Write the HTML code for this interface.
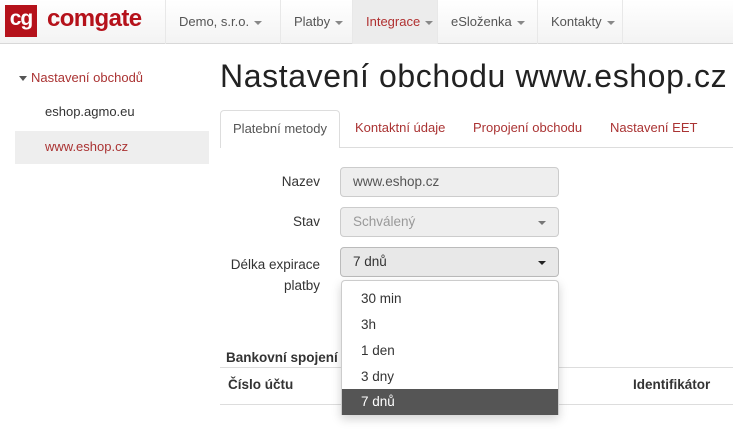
<!DOCTYPE html>
<html><head><meta charset="utf-8"><style>
*{box-sizing:border-box;margin:0;padding:0}
body{width:733px;height:429px;overflow:hidden;background:#fff;font-family:"Liberation Sans",sans-serif;font-size:13.5px;color:#333;position:relative}
.a{position:absolute}
.nav{left:0;top:0;width:733px;height:44px;background:linear-gradient(#fff,#f3f3f3);border-bottom:1px solid #d8d8d8}
.ni{top:0;height:44px;line-height:43px;border-left:1px solid #e8e8e8;color:#555;font-size:13px;padding-left:13px}
.car{display:inline-block;width:0;height:0;border-left:4px solid transparent;border-right:4px solid transparent;border-top:4px solid #888;vertical-align:middle;margin-left:5px}
.lbl{right:413px;text-align:right;font-size:13.5px;color:#333}
.inp{left:340px;width:219px;height:30px;border:1px solid #ccc;border-radius:4px;background:#eee;padding-left:12px;line-height:28px;font-size:13.5px;color:#555}
.dd{left:341px;top:280px;width:218px;height:135px;border:1px solid #ccc;border-bottom:none;border-radius:4px 4px 0 0;background:#fff;box-shadow:0 4px 10px rgba(0,0,0,.18);overflow:hidden}
.it{position:absolute;left:0;width:216px;height:26px;line-height:26px;padding-left:19px;font-size:13.5px;color:#333}
</style></head><body>
<div class="a nav"></div>
<div class="a" style="left:5px;top:5px;width:32px;height:32px;background:#b5121b;color:#fff;font-weight:bold;font-size:21px;line-height:28px;text-align:center;letter-spacing:-1px">cg</div>
<div class="a" style="left:47px;top:5px;font-size:24px;font-weight:bold;color:#b5121b;letter-spacing:-0.6px">comgate</div>
<div class="a ni" style="left:165px;width:115px">Demo, s.r.o.<span class="car"></span></div>
<div class="a ni" style="left:280px;width:72px">Platby<span class="car"></span></div>
<div class="a ni" style="left:352px;width:85px;background:#ececec;color:#b03030">Integrace<span class="car"></span></div>
<div class="a ni" style="left:437px;width:100px">eSloženka<span class="car"></span></div>
<div class="a ni" style="left:537px;width:86px;border-right:1px solid #e8e8e8">Kontakty<span class="car"></span></div>

<div class="a" style="left:19px;top:76px;width:0;height:0;border-left:4px solid transparent;border-right:4px solid transparent;border-top:5px solid #555"></div>
<div class="a" style="left:31px;top:70px;color:#a33;font-size:13px">Nastavení obchodů</div>
<div class="a" style="left:45px;top:104px;color:#333;font-size:13px">eshop.agmo.eu</div>
<div class="a" style="left:15px;top:131px;width:194px;height:33px;background:#eee"></div>
<div class="a" style="left:45px;top:139px;color:#a33;font-size:13px">www.eshop.cz</div>

<div class="a" style="left:220px;top:58px;font-size:32px;color:#222;letter-spacing:0.6px">Nastavení obchodu www.eshop.cz</div>
<div class="a" style="left:220px;top:147px;width:513px;height:1px;background:#ddd"></div>
<div class="a" style="left:220px;top:110px;width:120px;height:38px;border:1px solid #ddd;border-bottom:none;border-radius:4px 4px 0 0;background:#fff;text-align:center;line-height:36px;color:#555;font-size:13px">Platební metody</div>
<div class="a" style="left:355px;top:120px;color:#a33;font-size:13px">Kontaktní údaje</div>
<div class="a" style="left:473px;top:120px;color:#a33;font-size:13px">Propojení obchodu</div>
<div class="a" style="left:610px;top:120px;color:#a33;font-size:13px">Nastavení EET</div>

<div class="a lbl" style="top:174px">Nazev</div>
<div class="a inp" style="top:167px">www.eshop.cz</div>
<div class="a lbl" style="top:214px">Stav</div>
<div class="a inp" style="top:207px;color:#999">Schválený<span class="a" style="right:12px;top:13px;border-left:4px solid transparent;border-right:4px solid transparent;border-top:4px solid #777"></span></div>
<div class="a lbl" style="top:254px;line-height:21px">Délka expirace<br>platby</div>
<div class="a inp" style="top:247px;background:#e8e8e8;border-color:#bbb;color:#333">7 dnů<span class="a" style="right:12px;top:13px;border-left:4px solid transparent;border-right:4px solid transparent;border-top:4px solid #222"></span></div>

<div class="a" style="left:226px;top:350px;font-weight:bold;font-size:13.5px;color:#333">Bankovní spojení</div>
<div class="a" style="left:220px;top:367px;width:513px;height:1px;background:#ddd"></div>
<div class="a" style="left:228px;top:377px;font-weight:bold;color:#333">Číslo účtu</div>
<div class="a" style="left:633px;top:377px;font-weight:bold;color:#333">Identifikátor</div>
<div class="a" style="left:220px;top:404px;width:513px;height:1px;background:#ddd"></div>

<div class="a dd">
<div class="it" style="top:5px">30 min</div>
<div class="it" style="top:31px">3h</div>
<div class="it" style="top:57px">1 den</div>
<div class="it" style="top:83px">3 dny</div>
<div class="it" style="top:108px;background:#555;color:#fff">7 dnů</div>
</div>
</body></html>
